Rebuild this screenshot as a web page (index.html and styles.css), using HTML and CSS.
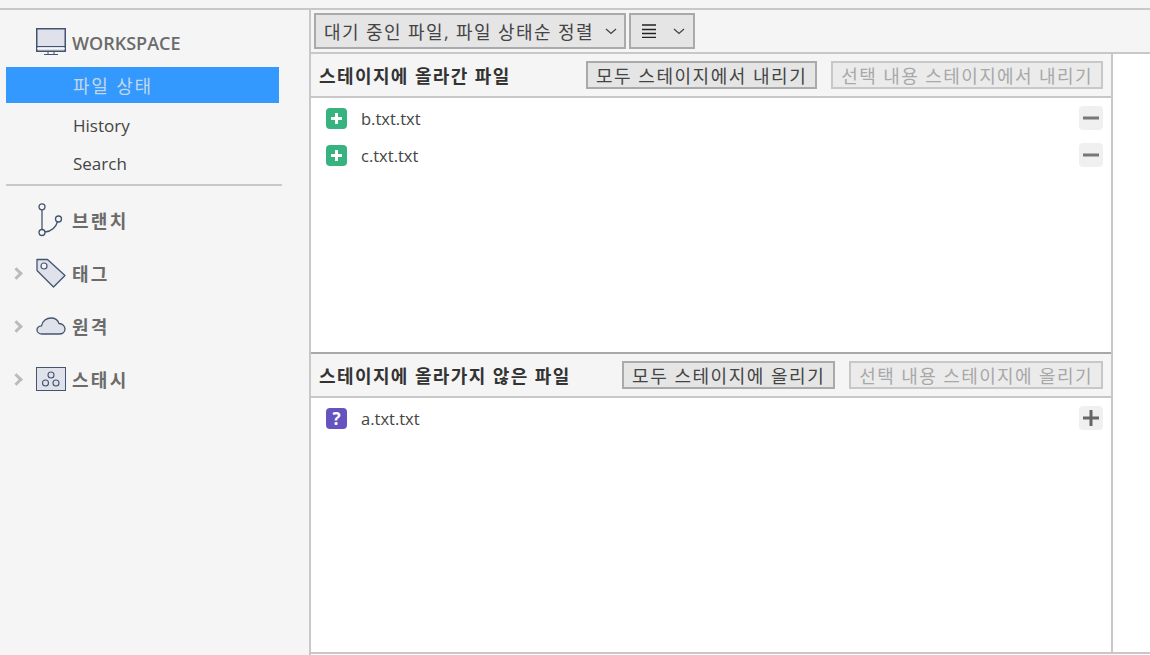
FILE: index.html
```html
<!DOCTYPE html>
<html lang="ko">
<head>
<meta charset="utf-8">
<title>Git</title>
<link rel="stylesheet" href="styles.css">
</head>
<body>
<div class="app">
  <aside class="sidebar">
    <div class="group-head workspace">
      <svg class="nav-icon monitor" width="30" height="27" viewBox="0 0 30 27"><rect x="0.750" y="0.750" width="28.500" height="22.500" fill="#dfe2ea" stroke="#44546f" stroke-width="1.500"/><path d="M1 18.500h28" stroke="#44546f"/><path d="M1 20.500h28" stroke="#fff" stroke-opacity=".7"/><path d="M12 24v2M18 24v2M8 26.500h14" stroke="#44546f"/></svg>
      <span>WORKSPACE</span>
    </div>
    <div class="nav-item selected">파일 상태</div>
    <div class="nav-item">History</div>
    <div class="nav-item">Search</div>
    <div class="sep"></div>
    <div class="group-head row">
      <svg class="nav-icon" width="30" height="34" viewBox="0 0 30 34"><g fill="none" stroke="#44546f" stroke-width="1.300"><circle cx="6" cy="3.800" r="3"/><circle cx="6" cy="29.500" r="3"/><circle cx="22.500" cy="16" r="3"/><path d="M6 6.800v19.700M9 29c7-.8 11-5 12.500-10.200"/></g></svg>
      <span class="ko">브랜치</span>
    </div>
    <div class="group-head row">
      <span class="chev"></span>
      <svg class="nav-icon" width="30" height="30" viewBox="0 0 30 30"><path d="M1 1.500h10.500L29 17.500 17.500 29 1 12.500z" fill="#dfe2ea" stroke="#44546f" stroke-width="1.300" stroke-linejoin="round"/><circle cx="8" cy="8" r="3" fill="#f5f5f5" stroke="#44546f" stroke-width="1.200"/></svg>
      <span class="ko">태그</span>
    </div>
    <div class="group-head row">
      <span class="chev"></span>
      <svg class="nav-icon" width="30" height="18" viewBox="0 0 30 18"><path d="M6 17C3 17 1 15.300 1 13c0-2.300 1.800-4 4.500-4.200C6.500 4 10.500 1 15 1c4 0 6.800 2 8 5.500 3.500.3 6 2.700 6 5.500 0 3-2.500 5-6 5z" fill="#dfe2ea" stroke="#44546f" stroke-width="1.300"/></svg>
      <span class="ko">원격</span>
    </div>
    <div class="group-head row">
      <span class="chev"></span>
      <svg class="nav-icon" width="30" height="24" viewBox="0 0 30 24"><rect x="0.500" y="0.500" width="29" height="23" fill="#dfe2ea" stroke="#44546f"/><g fill="none" stroke="#44546f" stroke-width="1.100"><circle cx="15" cy="8" r="3"/><circle cx="9.500" cy="16" r="3"/><circle cx="20" cy="16" r="3"/></g></svg>
      <span class="ko">스태시</span>
    </div>
  </aside>
  <main class="main">
    <div class="toolbar">
      <button class="btn select"><span>대기 중인 파일, 파일 상태순 정렬</span><svg width="12" height="7" viewBox="0 0 12 7"><path d="M1 1l5 4.500L11 1" fill="none" stroke="#444" stroke-width="1.300"/></svg></button>
      <button class="btn select menu"><svg width="14" height="14" viewBox="0 0 14 14"><path d="M0 1h14M0 5.500h14M0 9.500h14M0 13.500h14" stroke="#222" stroke-width="1.300"/></svg><svg width="12" height="7" viewBox="0 0 12 7"><path d="M1 1l5 4.500L11 1" fill="none" stroke="#444" stroke-width="1.300"/></svg></button>
    </div>
    <div class="panels">
      <section class="panel staged">
        <header class="panel-head">
          <h2>스테이지에 올라간 파일</h2>
          <button class="btn action">모두 스테이지에서 내리기</button>
          <button class="btn action disabled">선택 내용 스테이지에서 내리기</button>
        </header>
        <ul class="files">
          <li class="file">
            <svg class="badge" width="21" height="21" viewBox="0 0 21 21"><rect width="21" height="21" rx="4" fill="#36b37e"/><path d="M10.500 5v11M5 10.500h11" stroke="#fff" stroke-width="3"/></svg>
            <span class="name">b.txt.txt</span>
            <span class="act"><svg width="16" height="16" viewBox="0 0 16 16"><path d="M0 8h16" stroke="#777" stroke-width="3"/></svg></span>
          </li>
          <li class="file">
            <svg class="badge" width="21" height="21" viewBox="0 0 21 21"><rect width="21" height="21" rx="4" fill="#36b37e"/><path d="M10.500 5v11M5 10.500h11" stroke="#fff" stroke-width="3"/></svg>
            <span class="name">c.txt.txt</span>
            <span class="act"><svg width="16" height="16" viewBox="0 0 16 16"><path d="M0 8h16" stroke="#777" stroke-width="3"/></svg></span>
          </li>
        </ul>
      </section>
      <section class="panel unstaged">
        <header class="panel-head">
          <h2>스테이지에 올라가지 않은 파일</h2>
          <button class="btn action">모두 스테이지에 올리기</button>
          <button class="btn action disabled">선택 내용 스테이지에 올리기</button>
        </header>
        <ul class="files">
          <li class="file">
            <span class="badge q">?</span>
            <span class="name">a.txt.txt</span>
            <span class="act"><svg width="16" height="16" viewBox="0 0 16 16"><path d="M0 8h16M8 0v16" stroke="#666" stroke-width="3"/></svg></span>
          </li>
        </ul>
      </section>
    </div>
  </main>
</div>
</body>
</html>
```
FILE: styles.css
```css
* { box-sizing: border-box; }
html, body { margin: 0; padding: 0; height: 100%; background: #fff; overflow: hidden; }
body { font-family: "Open Sans", "Noto Sans CJK KR", sans-serif; color: #333; }
.app {
  height: 655px;
  padding-top: 8px;
  background: linear-gradient(#f5f5f5 8px, #fff 8px);
  display: flex;
}
.sidebar {
  width: 311px;
  height: 647px;
  flex: none;
  padding-top: 14px;
  background: #f5f5f5;
  border-top: 2px solid #c8c8c8;
  border-right: 2px solid #c8c8c8;
}
.group-head {
  display: flex;
  align-items: center;
  gap: 6px;
  padding-left: 36px;
  font-size: 18px;
  font-weight: 600;
  color: #6b6b6b;
  position: relative;
}
.workspace { height: 38px; margin-bottom: 5px; }
.monitor { margin-top: -3px; }
.group-head.row { height: 53px; }
.ko { letter-spacing: 2.300px; font-weight: 700; }
.sep + .row { margin-top: 7px; }
.nav-icon { flex: none; }
.chev {
  position: absolute;
  left: 12px;
  top: 50%;
  width: 9px;
  height: 9px;
  margin-top: -4px;
  border-top: 3px solid #bbb;
  border-right: 3px solid #bbb;
  transform: rotate(45deg);
}
.nav-item {
  height: 38px;
  margin-left: 6px;
  width: 274px;
  padding-left: 67px;
  display: flex;
  align-items: center;
  font-size: 17px;
  color: #444;
}
.nav-item.selected {
  height: 36px;
  width: 273px;
  background: #3399ff;
  color: #c3d6ea;
  font-size: 18px;
  letter-spacing: 1.800px;
  margin-bottom: 3px;
}
.sep { height: 2px; width: 276px; margin: 2px 0 0 6px; background: #c8c8c8; }
.main { flex: 1; min-width: 0; display: flex; flex-direction: column; height: 646px; border-bottom: 2px solid #c8c8c8; }
.toolbar {
  height: 46px;
  flex: none;
  display: flex;
  gap: 3px;
  padding: 3px 0 0 3px;
  background: #f5f5f5;
  border-top: 2px solid #c8c8c8;
  border-bottom: 2px solid #c8c8c8;
}
.btn {
  display: flex;
  align-items: center;
  justify-content: center;
  font-family: inherit;
  font-size: 18px;
  letter-spacing: 1.400px;
  color: #444;
  background: #e5e5e5;
  border: 2px solid #aaa;
  padding: 0;
  white-space: nowrap;
}
.select { height: 36px; width: 312px; justify-content: flex-start; gap: 11px; padding-left: 8px; }
.menu { width: 66px; gap: 17px; padding-left: 11px; }
.panels { flex: 1; min-height: 0; display: flex; flex-direction: column; width: 802px; border-right: 2px solid #c8c8c8; }
.staged { height: 298px; flex: none; }
.unstaged { flex: 1; border-top: 2px solid #a8a8a8; }
.panel { display: flex; flex-direction: column; background: #fff; }
.panel-head {
  height: 44px;
  flex: none;
  display: flex;
  align-items: center;
  gap: 14px;
  padding: 0 8px 0 8px;
  background: #f5f5f5;
  border-bottom: 2px solid #c8c8c8;
}
.panel-head h2 {
  margin: 0 auto 0 0;
  font-size: 18px;
  font-weight: 700;
  color: #333;
  letter-spacing: 1.400px;
}
.action { height: 28px; padding: 0 8px; letter-spacing: 1.520px; }
.action.disabled { color: #a8a8a8; background: #ebebeb; border-color: #c8c8c8; letter-spacing: 1.400px; }
.files { list-style: none; margin: 0; padding: 2px 0 0; }
.file {
  height: 37px;
  display: flex;
  align-items: center;
  padding: 0 8px 0 15px;
}
.badge { flex: none; }
.q {
  width: 21px;
  height: 21px;
  border-radius: 4px;
  background: #6554c0;
  color: #fff;
  font-size: 17px;
  font-weight: 700;
  display: flex;
  align-items: center;
  justify-content: center;
}
.name { margin-left: 14px; font-size: 16.500px; color: #444; flex: 1; }
.act {
  width: 24px;
  height: 24px;
  margin-top: -1px;
  border-radius: 4px;
  background: #f0f0f0;
  display: flex;
  align-items: center;
  justify-content: center;
}
```
